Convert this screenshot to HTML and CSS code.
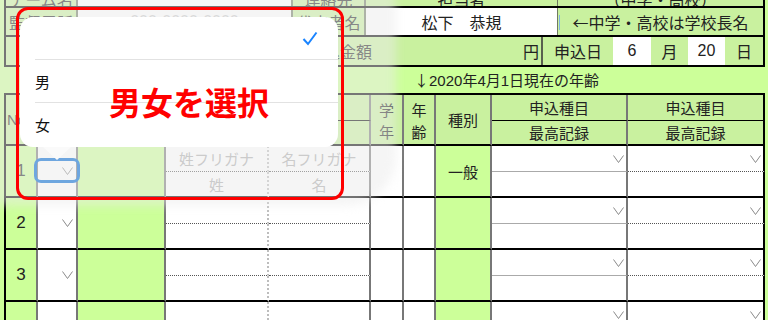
FILE: index.html
```html
<!DOCTYPE html>
<html lang="ja">
<head>
    <meta charset="UTF-8">
    <meta name="viewport" content="width=device-width, initial-scale=1.0">
    <title>申込書</title>
    <link rel="stylesheet" href="styles.css">
</head>
<body>
    <div class="sheet">
        <!-- 上部の入力欄 -->
        <div class="row row-a">
            <div class="cell label w1"><span>チーム名</span></div>
            <div class="cell blank w2"></div>
            <div class="cell label w3"><span>連絡先</span></div>
            <div class="cell label w4"><span>担当者</span></div>
            <div class="cell label w5 end"><span>（中学・高校）</span></div>
        </div>
        <div class="row row-b">
            <div class="cell label w1">監督電話</div>
            <div class="cell blank w2 hint">000-0000-0000</div>
            <div class="cell label w3">代表者名</div>
            <div class="cell blank w4">松下　恭規</div>
            <div class="cell label w5 end note"><span class="arrow">←</span>中学・高校は学校長名</div>
        </div>
        <div class="row row-c">
            <div class="cell label amount">
                <span class="amount-name">申込金額</span>
                <span>円</span>
            </div>
            <div class="cell label d1">申込日</div>
            <div class="cell blank d2">6</div>
            <div class="cell label d3">月</div>
            <div class="cell blank d3">20</div>
            <div class="cell label d4 end">日</div>
        </div>
        <div class="age-note"><span class="arrow">↓</span>2020年4月1日現在の年齢</div>

        <!-- 選手一覧 -->
        <div class="grid">
            <div class="h span2 no">No</div>
            <div class="h span2">性別</div>
            <div class="h span2">所属</div>
            <div class="h name-h">氏　名</div>
            <div class="h span2 pair"><span>学</span><span>年</span></div>
            <div class="h span2 pair"><span>年</span><span>齢</span></div>
            <div class="h span2">種別</div>
            <div class="h ev-h">申込種目</div>
            <div class="h ev-h last">申込種目</div>
            <div class="h name-h2">フリガナ</div>
            <div class="h">最高記録</div>
            <div class="h last">最高記録</div>

            <div class="num span2">1</div>
            <div class="sel span2"><svg class="chev" viewBox="0 0 11 8"><path d="M0.5 0.5L5.5 7.5L10.5 0.5"/></svg></div>
            <div class="green span2"></div>
            <div class="kana sei">姓フリガナ</div>
            <div class="kana">名フリガナ</div>
            <div class="white span2"></div>
            <div class="white span2"></div>
            <div class="green span2">一般</div>
            <div class="ev"><svg class="chev" viewBox="0 0 11 8"><path d="M0.5 0.5L5.5 7.5L10.5 0.5"/></svg></div>
            <div class="ev dot last"><svg class="chev" viewBox="0 0 11 8"><path d="M0.5 0.5L5.5 7.5L10.5 0.5"/></svg></div>
            <div class="nm sei">姓</div>
            <div class="nm">名</div>
            <div class="rec"></div>
            <div class="rec last"></div>

            <div class="num span2">2</div>
            <div class="sel span2"><svg class="chev" viewBox="0 0 11 8"><path d="M0.5 0.5L5.5 7.5L10.5 0.5"/></svg></div>
            <div class="green span2"></div>
            <div class="kana sei"></div>
            <div class="kana"></div>
            <div class="white span2"></div>
            <div class="white span2"></div>
            <div class="green span2"></div>
            <div class="ev"><svg class="chev" viewBox="0 0 11 8"><path d="M0.5 0.5L5.5 7.5L10.5 0.5"/></svg></div>
            <div class="ev dot last"><svg class="chev" viewBox="0 0 11 8"><path d="M0.5 0.5L5.5 7.5L10.5 0.5"/></svg></div>
            <div class="nm sei"></div>
            <div class="nm"></div>
            <div class="rec"></div>
            <div class="rec last"></div>

            <div class="num span2">3</div>
            <div class="sel span2"><svg class="chev" viewBox="0 0 11 8"><path d="M0.5 0.5L5.5 7.5L10.5 0.5"/></svg></div>
            <div class="green span2"></div>
            <div class="kana sei"></div>
            <div class="kana"></div>
            <div class="white span2"></div>
            <div class="white span2"></div>
            <div class="green span2"></div>
            <div class="ev"><svg class="chev" viewBox="0 0 11 8"><path d="M0.5 0.5L5.5 7.5L10.5 0.5"/></svg></div>
            <div class="ev dot last"><svg class="chev" viewBox="0 0 11 8"><path d="M0.5 0.5L5.5 7.5L10.5 0.5"/></svg></div>
            <div class="nm sei"></div>
            <div class="nm"></div>
            <div class="rec"></div>
            <div class="rec last"></div>

            <div class="num span2">4</div>
            <div class="sel span2"><svg class="chev" viewBox="0 0 11 8"><path d="M0.5 0.5L5.5 7.5L10.5 0.5"/></svg></div>
            <div class="green span2"></div>
            <div class="kana sei"></div>
            <div class="kana"></div>
            <div class="white span2"></div>
            <div class="white span2"></div>
            <div class="green span2"></div>
            <div class="ev"><svg class="chev" viewBox="0 0 11 8"><path d="M0.5 0.5L5.5 7.5L10.5 0.5"/></svg></div>
            <div class="ev dot last"><svg class="chev" viewBox="0 0 11 8"><path d="M0.5 0.5L5.5 7.5L10.5 0.5"/></svg></div>
            <div class="nm sei"></div>
            <div class="nm"></div>
            <div class="rec"></div>
            <div class="rec last"></div>
        </div>

        <!-- ポップオーバーまわり -->
        <div class="glow"></div>
        <div class="focus"></div>
        <div class="popover">
            <div class="opt">
                <span></span>
                <svg class="check" viewBox="0 0 16 15"><path d="M1.5 8L6 13L14.5 1.5"/></svg>
            </div>
            <div class="opt">男</div>
            <div class="opt">女</div>
        </div>
        <div class="frame"></div>
        <div class="callout">男女を選択</div>
    </div>
</body>
</html>
```

FILE: styles.css
```css
*{
    margin: 0;
    padding: 0;
    box-sizing: border-box;
}
body{
    background-color: #ccff99;
    font-family: "Liberation Sans", "Noto Sans CJK JP", sans-serif;
    color: #222;
}
.sheet{
    position: relative;
    width: 768px;
    height: 320px;
    overflow: hidden;
}
.arrow{
    font-family: "Noto Sans CJK JP", sans-serif;
}

/* 上部の行 */
.row{
    display: flex;
    margin-left: 4px;
    width: 761px;
    border-left: 2px solid #000;
    border-bottom: 2px solid #000;
}
.row-a{
    height: 8px;
}
.row-b{
    height: 29px;
}
.row-c{
    height: 30px;
}
.cell{
    display: flex;
    align-items: center;
    justify-content: center;
    border-right: 2px solid #6f7a62;
    font-size: 16px;
    white-space: nowrap;
    overflow: hidden;
}
.cell.end{
    border-right: 2px solid #000;
}
.label{
    background-color: #c9f19f;
}
.blank{
    background-color: #fff;
}
.row-a .cell{
    align-items: flex-end;
    line-height: 11px;
}
.w1{ width: 72px; }
.w2{ width: 215px; }
.w3{ width: 73px; }
.w4{ width: 192px; border-right-width: 1px; }
.w5{ width: 207px; }
.hint{
    color: #c8c8c8;
}
.note{
    position: relative;
}
/* 入力カーソル */
.note::before{
    content: "";
    position: absolute;
    left: 1px;
    top: 7px;
    width: 1px;
    height: 15px;
    background-color: #7fb2e8;
}
.amount{
    width: 537px;
    justify-content: space-between;
    padding-right: 2px;
}
.amount-name{
    width: 366px;
    text-align: right;
}
.row-c .cell{
    border-right: none;
}
.row-c .amount{
    border-right: 2px solid #59604f;
}
.row-c .cell.end{
    border-right: 2px solid #000;
}
.d1{ width: 70px; }
.d2{ width: 38px; }
.d3{ width: 37px; }
.d4{ width: 40px; }
.age-note{
    height: 26px;
    line-height: 26px;
    padding-left: 414px;
    font-size: 15px;
}

/* 選手一覧 */
.grid{
    display: grid;
    grid-template-columns: 32px 40px 88px 103px 102px 33px 32px 56px 136px 137px;
    grid-template-rows: 26px 25px repeat(4, 26px 26px);
    margin-left: 4px;
    width: 761px;
    border-left: 2px solid #000;
    border-top: 2px solid #000;
    font-size: 15px;
}
.grid > div{
    display: flex;
    align-items: center;
    justify-content: center;
    border-right: 2px solid #777;
    border-bottom: 2px solid #000;
    background-color: #fff;
}
.grid > .last{
    border-right: 2px solid #000;
}
.span2{
    grid-row: span 2;
}
.grid > .h{
    background-color: #c9f19f;
}
.grid > .name-h, .grid > .name-h2{
    grid-column: span 2;
}
.grid > .name-h, .grid > .ev-h{
    border-bottom: 1px solid #000;
}
.grid > .no{
    justify-content: flex-start;
    padding-left: 1px;
}
.grid > .pair{
    flex-direction: column;
    justify-content: space-around;
    padding: 3px 0 1px;
}
.grid > .num{
    background-color: #ccff99;
    font-size: 17px;
}
.grid > .green{
    background-color: #ccff99;
}
.grid > .sel{
    justify-content: flex-end;
    padding-right: 3px;
}
.chev{
    width: 11px;
    height: 8px;
    fill: none;
    stroke: #8a8a8a;
    stroke-width: 1;
}
.grid > .kana{
    border-bottom: 1px dotted #555;
    color: #aaa;
}
.grid > .nm{
    color: #aaa;
}
.grid > .sei{
    border-right: 2px dotted #bdbdbd;
}
.grid > .ev{
    justify-content: flex-end;
    padding-right: 2px;
    border-bottom: 1px solid #aaa;
}
.grid > .ev.dot{
    border-bottom: 1px dotted #555;
}

/* ポップオーバーまわり */
.glow{
    position: absolute;
    left: -40px;
    top: -40px;
    width: 436px;
    height: 246px;
    border-radius: 50px;
    background-color: rgba(236, 236, 236, 0.5);
    filter: blur(5px);
}
.focus{
    position: absolute;
    left: 34px;
    top: 158px;
    width: 46px;
    height: 25px;
    border: 3px solid #6ea6df;
    border-radius: 7px;
}
.popover{
    position: absolute;
    left: 20px;
    top: 17px;
    width: 318px;
    height: 130px;
    background-color: #fff;
    border-radius: 13px;
    padding-left: 15px;
}
.popover::after{
    content: "";
    position: absolute;
    left: 23px;
    top: 130px;
    border-top: 13px solid #fafafa;
    border-left: 14px solid transparent;
    border-right: 14px solid transparent;
}
.opt{
    display: flex;
    align-items: center;
    justify-content: space-between;
    height: 43px;
    padding-right: 20px;
    border-bottom: 1px solid #e2e2e2;
    font-size: 15px;
    color: #111;
}
.opt:last-child{
    border-bottom: none;
}
.check{
    width: 16px;
    height: 15px;
    fill: none;
    stroke: #1a84ff;
    stroke-width: 2;
}
.frame{
    position: absolute;
    left: 16px;
    top: 7px;
    width: 328px;
    height: 193px;
    border: 3px solid #ff0000;
    border-radius: 12px;
}
.callout{
    position: absolute;
    left: 109px;
    top: 82px;
    font-size: 32px;
    line-height: 38px;
    font-weight: bold;
    color: #ff0000;
    font-family: "Noto Sans CJK JP", sans-serif;
}
```
